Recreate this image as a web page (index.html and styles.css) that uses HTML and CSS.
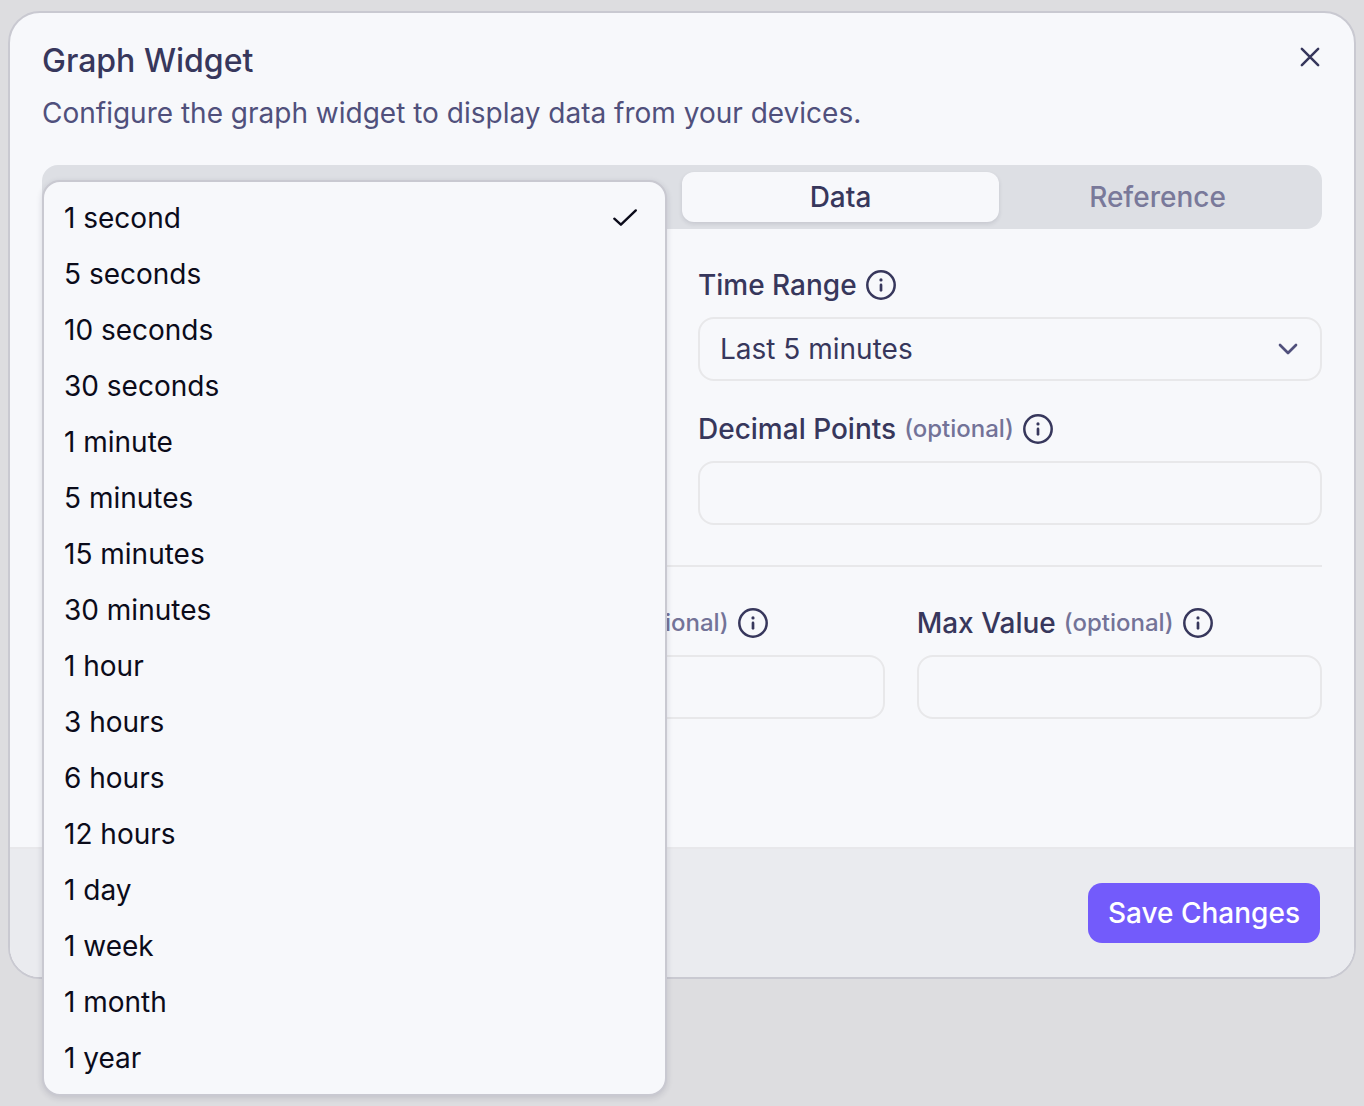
FILE: index.html
```html
<!DOCTYPE html>
<html lang="en">
<head>
  <meta charset="utf-8">
  <meta name="viewport" content="width=device-width, initial-scale=1">
  <title>Graph Widget</title>
  <link rel="stylesheet" href="styles.css">
</head>
<body>
  <svg class="sprite" aria-hidden="true">
    <symbol id="info" viewBox="0 0 32 32">
      <circle cx="16" cy="16" r="13.7" fill="none" stroke="currentColor" stroke-width="2.5"/>
      <circle cx="16" cy="10.9" r="1.6" fill="currentColor"/>
      <path d="M16 15.9v5.4" fill="none" stroke="currentColor" stroke-width="2.7" stroke-linecap="round"/>
    </symbol>
  </svg>

  <main class="dialog" role="dialog" aria-labelledby="dialog-title">
    <div class="content">
      <header class="header">
        <div class="heading">
          <h1 class="title" id="dialog-title">Graph Widget</h1>
          <p class="description">Configure the graph widget to display data from your devices.</p>
        </div>
        <button class="close" type="button" aria-label="Close">
          <svg class="icon" viewBox="0 0 24 24" fill="none" stroke="currentColor" stroke-width="1.9" stroke-linecap="round"><path d="M5.9 5.9l12.2 12.2M18.1 5.9L5.9 18.1"/></svg>
        </button>
      </header>

      <div class="tabs" role="tablist">
        <button class="tab tab-active" type="button" role="tab" aria-selected="true">Data</button>
        <button class="tab" type="button" role="tab" aria-selected="false">Reference</button>
      </div>

      <form class="form" id="widget-form">
        <div class="row row-halves">
          <div class="field interval">
            <ul class="menu" role="listbox" tabindex="0">
              <li class="option" role="option" aria-selected="true">1 second
                <svg class="icon" viewBox="0 0 32 32" fill="none" stroke="currentColor" stroke-width="2.4" stroke-linecap="round" stroke-linejoin="round"><path d="M5.3 16.7l6.6 6L26.8 8.4"/></svg>
              </li>
              <li class="option" role="option">5 seconds</li>
              <li class="option" role="option">10 seconds</li>
              <li class="option" role="option">30 seconds</li>
              <li class="option" role="option">1 minute</li>
              <li class="option" role="option">5 minutes</li>
              <li class="option" role="option">15 minutes</li>
              <li class="option" role="option">30 minutes</li>
              <li class="option" role="option">1 hour</li>
              <li class="option" role="option">3 hours</li>
              <li class="option" role="option">6 hours</li>
              <li class="option" role="option">12 hours</li>
              <li class="option" role="option">1 day</li>
              <li class="option" role="option">1 week</li>
              <li class="option" role="option">1 month</li>
              <li class="option" role="option">1 year</li>
            </ul>
          </div>
          <div class="field">
            <label class="label" for="range">Time Range <svg class="icon"><use href="#info"/></svg></label>
            <div class="select">
              <select class="control" id="range"><option>Last 5 minutes</option></select>
              <svg class="icon chevron" viewBox="0 0 24 24" fill="none" stroke="currentColor" stroke-width="2" stroke-linecap="round" stroke-linejoin="round"><path d="M6 9l6 6 6-6"/></svg>
            </div>
          </div>
          <div class="field field-right">
            <label class="label" for="decimals">Decimal Points <span class="optional">(optional)</span> <svg class="icon"><use href="#info"/></svg></label>
            <input class="control" id="decimals" type="text">
          </div>
        </div>
        <hr class="divider">
        <div class="row row-thirds">
          <div class="field field-min">
            <label class="label" for="min">Min Value <span class="optional">(optional)</span> <svg class="icon"><use href="#info"/></svg></label>
            <input class="control" id="min" type="text">
          </div>
          <div class="field">
            <label class="label" for="max">Max Value <span class="optional">(optional)</span> <svg class="icon"><use href="#info"/></svg></label>
            <input class="control" id="max" type="text">
          </div>
        </div>
      </form>
    </div>
    <footer class="footer">
      <button class="save" type="submit" form="widget-form">Save Changes</button>
    </footer>
  </main>
</body>
</html>
```
FILE: styles.css
```css
* {
  box-sizing: border-box;
}

body {
  min-height: 100vh;
  margin: 0;
  padding: 11px 8px;
  background: #dddde0;
  color: #37375c;
  font-family: Inter, "Liberation Sans", sans-serif;
  font-size: 28px;
  line-height: 32px;
}

button,
input,
select {
  font: inherit;
  color: inherit;
}

.sprite {
  display: none;
}

.icon {
  flex: none;
  width: 32px;
  height: 32px;
}

.dialog {
  border: 2px solid #c9c9d1;
  border-radius: 32px;
  background: #f7f8fb;
}

.content {
  padding: 32px 32px 128px;
}

.header {
  display: flex;
  justify-content: space-between;
  align-items: flex-start;
}

.heading {
  display: flex;
  flex-direction: column;
  gap: 16px;
}

.title {
  margin: 0;
  font-size: 32px;
  font-weight: 500;
}

.description {
  margin: 0;
  color: #50507c;
  line-height: 40px;
}

.close {
  display: flex;
  margin: -4px -4px 0 0;
  padding: 0;
  border: 0;
  background: none;
}

.tabs {
  display: grid;
  grid-template-columns: repeat(4, 1fr);
  margin: 32px 0 40px;
  padding: 7px 6px;
  border-radius: 16px;
  background: #dddfe4;
}

.tab {
  height: 50px;
  padding: 0;
  border: 0;
  border-radius: 12px;
  background: none;
  color: #79799a;
  font-weight: 500;
}

.tab-active {
  grid-column: 3;
  background: #f7f8fb;
  color: #37375c;
  box-shadow: 0 2px 4px rgb(30 30 60 / 12%);
}

.row {
  display: grid;
  gap: 32px;
}

.row-halves {
  grid-template-columns: repeat(2, 1fr);
}

.row-thirds {
  grid-template-columns: repeat(3, 1fr);
}

.field {
  display: flex;
  flex-direction: column;
  gap: 16px;
  min-width: 0;
}

.field-right,
.field-min {
  grid-column: 2;
}

.label {
  display: flex;
  align-items: center;
  gap: 8px;
  font-weight: 500;
  white-space: nowrap;
}

.optional {
  color: #737398;
  font-size: 24px;
}

.control {
  width: 100%;
  height: 64px;
  padding: 0 20px;
  border: 2px solid #e8e8ea;
  border-radius: 16px;
  background: transparent;
  appearance: none;
}

.select {
  display: grid;
  align-items: center;
}

.select > * {
  grid-area: 1 / 1;
}

.chevron {
  justify-self: end;
  margin-right: 18px;
  color: #50507c;
  pointer-events: none;
}

.divider {
  height: 2px;
  margin: 40px 0;
  border: 0;
  background: #e8e8ea;
}

.interval {
  position: relative;
}

/* The open list covers its own trigger and the left half of the dialog. */
.menu {
  position: absolute;
  z-index: 1;
  top: -89px;
  right: -1px;
  left: 0;
  margin: 0;
  padding: 8px 0;
  border: 2px solid #c9c9d1;
  border-radius: 18px;
  background: #f7f8fb;
  color: #0b0b1a;
  box-shadow: 0 2px 6px rgb(30 30 60 / 14%);
  list-style: none;
}

.option {
  display: flex;
  justify-content: space-between;
  align-items: center;
  height: 56px;
  padding: 0 24px 0 20px;
}

.footer {
  display: flex;
  justify-content: flex-end;
  padding: 34px;
  border-top: 2px solid #e8e8eb;
  border-radius: 0 0 30px 30px;
  background: #eaebef;
}

.save {
  height: 60px;
  padding: 0 20px;
  border: 0;
  border-radius: 14px;
  background: #735bfb;
  color: #fff;
  font-weight: 500;
}
```
